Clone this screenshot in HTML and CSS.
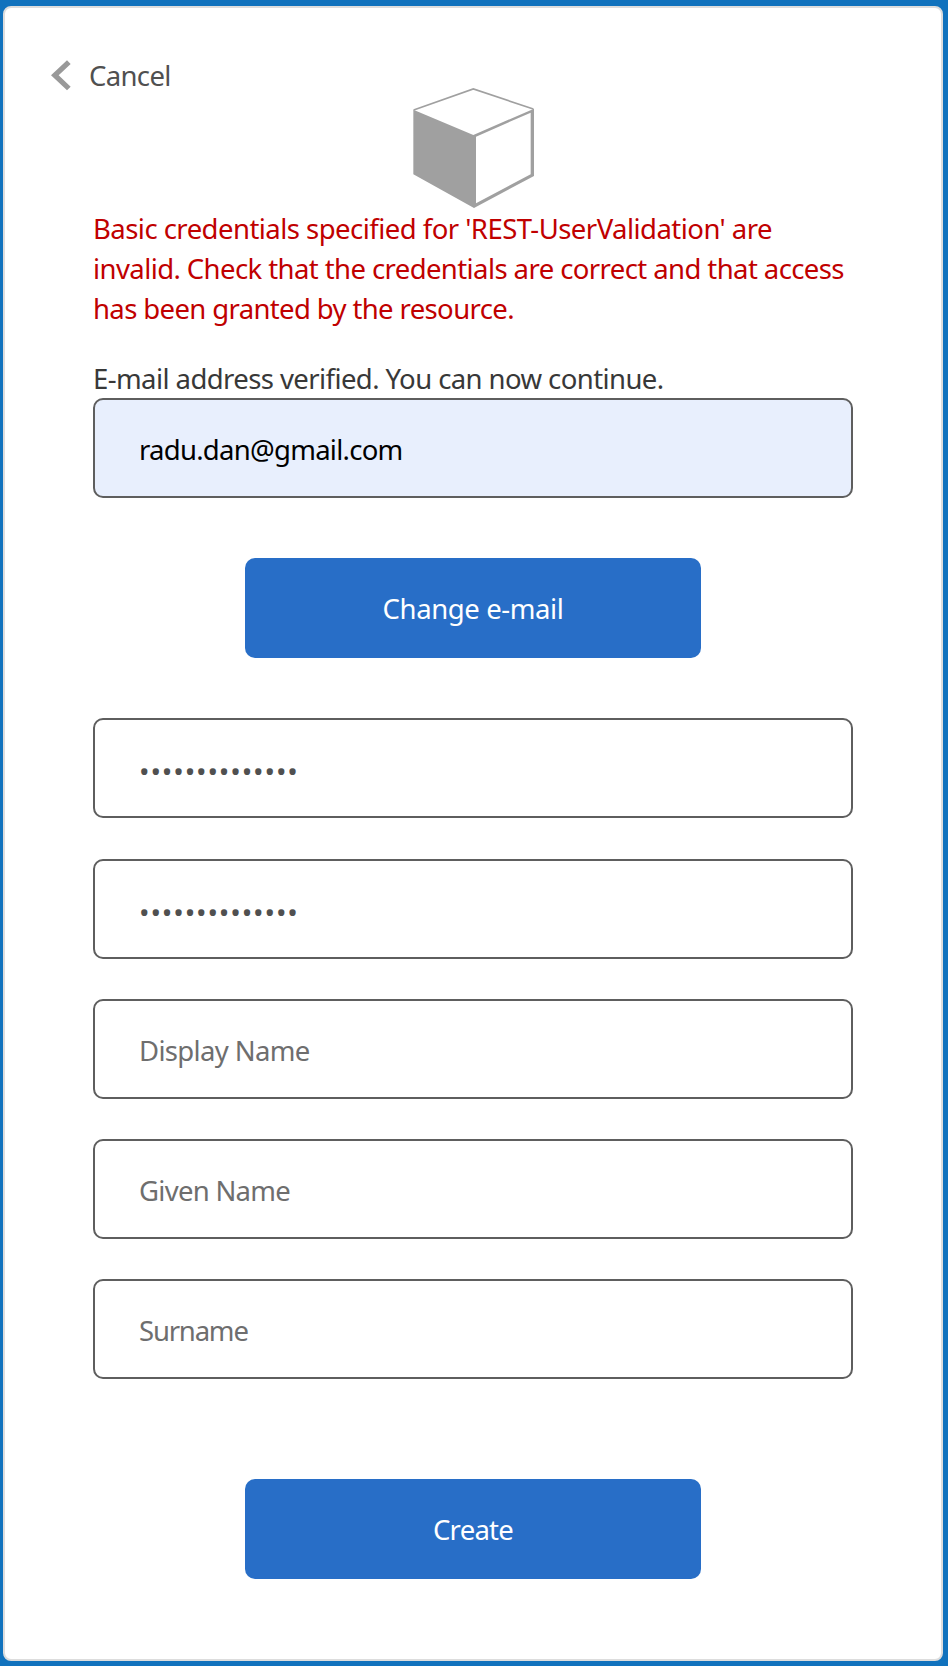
FILE: index.html
```
<!DOCTYPE html>
<html lang="en">
<head>
<meta charset="utf-8">
<title>Sign up</title>
<link rel="stylesheet" href="styles.css">
</head>
<body>
<main class="card">
  <a class="cancel">
    <svg class="chevron" viewBox="150 180 63 93"><path d="M153 226 201 181 212 192 176 226 212 260 201 271Z"/></svg>
    <span class="cancel-text">Cancel</span>
  </a>
  <svg class="logo" viewBox="36 21 369 366">
    <path class="logo-top" d="M41 90 220 27 400 87"/>
    <path class="logo-side" fill-rule="evenodd" d="M40 89 220 165 402 86V288L222 384 40 283ZM228 170V370L392 283V98Z"/>
  </svg>
  <form class="form">
    <p class="error"><span class="line l1">Basic credentials specified for 'REST-UserValidation' are</span> <span class="line l2">invalid. Check that the credentials are correct and that access</span> <span class="line l3">has been granted by the resource.</span></p>
    <p class="status"><span class="line">E-mail address verified. You can now continue.</span></p>
    <input class="field email" type="text" value="radu.dan@gmail.com">
    <button class="button change" type="button">Change e-mail</button>
    <input class="field password first" type="password" value="password123456">
    <input class="field password second" type="password" value="password123456">
    <input class="field display" type="text" placeholder="Display Name">
    <input class="field given" type="text" placeholder="Given Name">
    <input class="field surname" type="text" placeholder="Surname">
    <button class="button create" type="button">Create</button>
  </form>
</main>
</body>
</html>
```
FILE: styles.css
```
* { box-sizing: border-box; }
body {
  margin: 0;
  height: 1666px;
  padding: 6px 5px 5px 3px;
  background: #1172bd;
  font: 27.5px/40px "Noto Sans", "Open Sans", sans-serif;
}
.card {
  display: flex;
  flex-direction: column;
  height: 1655px;
  border: 2px solid #ddd;
  border-radius: 8px;
  background: #fff;
}
.cancel {
  display: flex;
  gap: 18px;
  height: 40px;
  margin: 48px 0 0 45px;
  color: #505050;
  letter-spacing: -0.65px;
}
.chevron { width: 21px; height: 31px; margin-top: 4px; fill: #999; }
.logo { width: 123px; height: 122px; margin: -9px 0 0 407px; fill: #a0a0a0; }
.logo-top { fill: none; stroke: #a0a0a0; stroke-width: 5; }
.form { display: flex; flex-direction: column; width: 760px; margin: 0 0 0 88px; }
.line { white-space: nowrap; }
.error { margin: 0; color: #c00000; }
.error .line { display: block; }
.l1 { letter-spacing: -0.537px; }
.l2 { letter-spacing: -0.59px; }
.l3 { letter-spacing: -0.628px; }
.status { margin: 30px 0 -1px; color: #383838; letter-spacing: -0.584px; }
.field {
  width: 760px;
  height: 100px;
  margin: 0 0 40px;
  padding: 2px 44px 0;
  border: 2px solid #5e5e5e;
  border-radius: 10px;
  background: #fff;
  color: #505050;
  font: inherit;
}
.field::placeholder { color: #6e6e6e; opacity: 1; }
.email { margin-bottom: 60px; background: #e8effd; color: #000; letter-spacing: -0.73px; }
.password { padding-top: 6px; font-size: 28px; letter-spacing: 0.88px; }
.first { margin-bottom: 41px; }
.display { letter-spacing: -0.66px; }
.given { letter-spacing: -0.72px; }
.surname { margin-bottom: 100px; letter-spacing: -1.2px; }
.button {
  width: 456px;
  height: 100px;
  margin: 0 0 60px 152px;
  padding: 2px 0 0;
  border: 0;
  border-radius: 10px;
  background: #286ec7;
  color: #fff;
  font: inherit;
}
.change { letter-spacing: -0.4px; }
.create { letter-spacing: -0.75px; }
```
